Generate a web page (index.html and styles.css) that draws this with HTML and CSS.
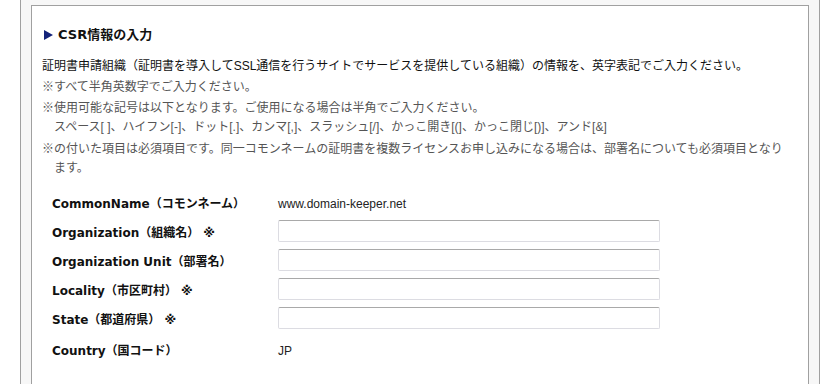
FILE: index.html
```html
<!DOCTYPE html>
<html lang="ja">
<head>
    <meta charset="UTF-8">
    <meta name="viewport" content="width=device-width, initial-scale=1.0">
    <title>CSR情報の入力</title>
    <link rel="stylesheet" href="styles.css">
</head>
<body>
    <div class="frame">
        <div class="panel">
            <h2 class="title"><span class="arrow"></span>CSR情報の入力</h2>
            <p class="lead">証明書申請組織（証明書を導入してSSL通信を行うサイトでサービスを提供している組織）の情報を、英字表記でご入力ください。</p>
            <p class="note">※すべて半角英数字でご入力ください。</p>
            <p class="note">※使用可能な記号は以下となります。ご使用になる場合は半角でご入力ください。<br>スペース[ ]、ハイフン[-]、ドット[.]、カンマ[,]、スラッシュ[/]、かっこ開き[(]、かっこ閉じ[)]、アンド[&amp;]</p>
            <p class="note note-last">※の付いた項目は必須項目です。同一コモンネームの証明書を複数ライセンスお申し込みになる場合は、部署名についても必須項目となり<br>ます。</p>

            <div class="form">
                <div class="field">
                    <div class="field-label">CommonName（コモンネーム）</div>
                    <div class="field-value">www.domain-keeper.net</div>
                </div>
                <div class="field">
                    <div class="field-label">Organization（組織名） ※</div>
                    <input type="text" class="text-input">
                </div>
                <div class="field">
                    <div class="field-label">Organization Unit（部署名）</div>
                    <input type="text" class="text-input">
                </div>
                <div class="field">
                    <div class="field-label">Locality（市区町村） ※</div>
                    <input type="text" class="text-input">
                </div>
                <div class="field">
                    <div class="field-label">State（都道府県） ※</div>
                    <input type="text" class="text-input">
                </div>
                <div class="field field-last">
                    <div class="field-label">Country（国コード）</div>
                    <div class="field-value">JP</div>
                </div>
            </div>
        </div>
    </div>
</body>
</html>
```

FILE: styles.css
```css
body {
    margin: 0;
    overflow: hidden;
    background-color: #fff;
    font-family: "Liberation Sans", "Noto Sans CJK JP", sans-serif;
    font-size: 12px;
    color: #222;
}
.frame {
    box-sizing: border-box;
    width: 800px;
    height: 384px;
    margin-left: 20px;
    padding: 5px 10px 0;
    background-color: #f7f7f7;
    border-left: 1px solid #a0a0a0;
    border-right: 1px solid #a0a0a0;
}
.panel {
    box-sizing: border-box;
    height: 100%;
    padding: 21px 10px 0;
    background-color: #fff;
    border: 1px solid #a0a0a0;
    border-bottom: none;
}
.title {
    display: flex;
    align-items: center;
    margin: 0 0 14px;
    font-family: "DejaVu Sans", "Noto Sans CJK JP", sans-serif;
    font-size: 13px;
    line-height: 16px;
    color: #111;
}
.arrow {
    width: 0;
    height: 0;
    margin: 0 5px 0 2px;
    border-top: 5px solid transparent;
    border-bottom: 5px solid transparent;
    border-left: 9px solid #14237a;
}
p {
    margin: 0 0 2px;
    line-height: 19px;
}
.lead {
    color: #111;
}
.note {
    padding-left: 12px;
    text-indent: -12px;
    color: #555;
}
.note-last {
    margin-top: 3px;
}
.form {
    margin: 10px 0 0 10px;
}
.field {
    display: flex;
    align-items: center;
    padding: 3px 0 4px;
}
.field-last {
    padding-top: 5px;
}
.field-label {
    width: 226px;
    padding-top: 4px;
    line-height: 18px;
    font-family: "DejaVu Sans", "Noto Sans CJK JP", sans-serif;
    font-weight: bold;
    color: #111;
}
.field-value {
    padding-top: 4px;
    line-height: 18px;
    color: #222;
}
.text-input {
    box-sizing: border-box;
    width: 382px;
    height: 22px;
    margin: 0;
    padding: 2px 4px;
    background-color: #fff;
    border: 1px solid #dcdce2;
    border-top-color: #a9a9a9;
    border-radius: 2px;
}
```
